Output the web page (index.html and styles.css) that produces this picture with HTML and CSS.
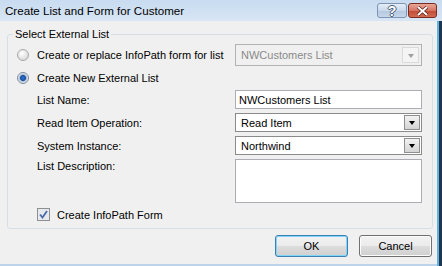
FILE: index.html
```html
<!DOCTYPE html>
<html>
	<head>
		<meta charset="UTF-8">
		<title>Create List and Form for Customer</title>
		<link rel="stylesheet" href="styles.css">
	</head>
	<body>
		<div class="dialog">
			<div class="titlebar">
				<span class="title">Create List and Form for Customer</span>
				<div class="caption-btns">
					<span class="cap-btn help">?</span>
					<span class="cap-btn close">
						<svg width="13" height="10" viewBox="0 0 13 10"><path d="M2 1 L11 9 M11 1 L2 9" stroke="#5a1d14" stroke-width="3.4"/><path d="M2 1 L11 9 M11 1 L2 9" stroke="#fff" stroke-width="2"/></svg>
					</span>
				</div>
			</div>
			<div class="body">
				<fieldset class="group">
					<legend>Select External List</legend>
					<div class="form-grid">
						<span class="radio"></span>
						<span class="label">Create or replace InfoPath form for list</span>
						<div class="combo disabled">
							<span class="combo-text">NWCustomers List</span>
							<span class="combo-btn"><i class="arrow"></i></span>
						</div>

						<span class="radio checked"></span>
						<span class="label span2">Create New External List</span>

						<span></span>
						<span class="label">List Name:</span>
						<div class="textbox">NWCustomers List</div>

						<span></span>
						<span class="label">Read Item Operation:</span>
						<div class="combo">
							<span class="combo-text">Read Item</span>
							<span class="combo-btn"><i class="arrow"></i></span>
						</div>

						<span></span>
						<span class="label">System Instance:</span>
						<div class="combo">
							<span class="combo-text">Northwind</span>
							<span class="combo-btn"><i class="arrow"></i></span>
						</div>

						<span></span>
						<span class="label top">List Description:</span>
						<div class="textarea"></div>

						<span></span>
						<div class="check-row span2">
							<span class="checkbox">
								<svg width="9" height="9" viewBox="0 0 9 9"><path d="M1 4.5 L3.5 7.5 L8 1" fill="none" stroke="#4a6aa8" stroke-width="1.8"/></svg>
							</span>
							<span class="label">Create InfoPath Form</span>
						</div>
					</div>
				</fieldset>
				<div class="buttons">
					<button class="btn default">OK</button>
					<button class="btn">Cancel</button>
				</div>
			</div>
		</div>
	</body>
</html>
```

FILE: styles.css
```css
body{
	margin: 0;
	padding: 0;
	font-family: "Liberation Sans", Arial, sans-serif;
	font-size: 11px;
	color: #000;
}
.dialog{
	width: 442px;
	height: 266px;
	box-sizing: border-box;
	background: #f0f0f0;
	display: flex;
	flex-direction: column;
	box-shadow: inset -3px 0 0 #1f3550, inset -5px 0 0 #5fb4e2, inset 0 -2px 0 #bcd3ea;
	overflow: hidden;
}
.titlebar{
	height: 21px;
	flex: none;
	display: flex;
	align-items: center;
	justify-content: space-between;
	background: linear-gradient(to bottom, #c8dbf0, #d8e6f5);
	padding-left: 5px;
	padding-right: 5px;
}
.title{
	font-size: 11.6px;
	margin-top: -1px;
}
.caption-btns{
	display: flex;
	align-self: flex-start;
	margin-top: 3px;
}
.cap-btn{
	height: 15px;
	display: flex;
	align-items: center;
	justify-content: center;
	box-sizing: border-box;
	border-radius: 3px;
}
.help{
	width: 30px;
	border: 1px solid #7d95b2;
	background: linear-gradient(to bottom, #e6eef8 0%, #c9d8ea 50%, #b3c7df 51%, #c6d6ea 100%);
	color: #fff;
	font-weight: bold;
	font-size: 14px;
	text-shadow: -1px 0 #4a5d78, 1px 0 #4a5d78, 0 -1px #4a5d78, 0 1px #4a5d78;
	margin-right: 1px;
}
.close{
	width: 29px;
	border: 1px solid #7a2c20;
	background: linear-gradient(to bottom, #e9a799 0%, #d47663 50%, #c24a33 51%, #d26b52 100%);
}
.body{
	flex: 1;
	display: flex;
	flex-direction: column;
}
.group{
	margin: 7px 9px 0 7px;
	padding: 0 8px 7px 8px;
	border: 1px solid #d5dfe5;
	border-radius: 3px;
	min-width: 0;
}
.group legend{
	padding: 0 2px;
	margin-left: -3px;
	line-height: 13px;
}
.form-grid{
	margin-top: 3px;
	display: grid;
	grid-template-columns: 21px 198px 187px;
	grid-template-rows: 22px 16px 19px 19px 19px 44px 14px;
	row-gap: 4px;
	align-items: center;
}
.span2{
	grid-column: span 2;
}
.label{
	white-space: nowrap;
}
.label.top{
	align-self: start;
	margin-top: 1px;
}
.radio{
	width: 12px;
	height: 12px;
	box-sizing: border-box;
	border-radius: 50%;
	border: 1px solid #a8a8a8;
	background: radial-gradient(circle at 40% 35%, #ffffff, #dcdcdc 70%);
	margin-left: 1px;
}
.radio.checked{
	border-color: #7b8a9c;
	background: radial-gradient(circle at 50% 50%, #2a7ad8 0, #1b4fa0 2.5px, #a9bdd3 3.5px, #eef1f5 5px);
}
.combo, .textbox, .textarea{
	box-sizing: border-box;
	background: #fff;
	height: 100%;
}
.combo{
	display: flex;
	align-items: stretch;
	border: 1px solid #8b8b8b;
	padding: 1px;
}
.combo-text{
	flex: 1;
	padding-left: 4px;
	display: flex;
	align-items: center;
}
.combo-btn{
	width: 16px;
	box-sizing: border-box;
	border: 1px solid #8f8f8f;
	background: linear-gradient(to bottom, #f2f2f2, #d4d4d4);
	display: flex;
	align-items: center;
	justify-content: center;
}
.arrow{
	width: 0;
	height: 0;
	border-left: 3.5px solid transparent;
	border-right: 3.5px solid transparent;
	border-top: 4px solid #000;
	margin-top: 1px;
}
.combo.disabled{
	background: #f0f0f0;
	border-color: #b2b2b2;
	color: #8a8a8a;
	padding: 2px;
}
.combo.disabled .combo-text{
	padding-left: 3px;
}
.combo.disabled .combo-btn{
	border-color: #dadada;
	background: #f4f4f4;
	width: 17px;
}
.combo.disabled .arrow{
	border-top-color: #a0a0a0;
}
.textbox{
	border: 1px solid #abadb3;
	padding-left: 3px;
	display: flex;
	align-items: center;
}
.textarea{
	border: 1px solid #abadb3;
}
.check-row{
	display: flex;
	align-items: center;
	gap: 7px;
	margin-top: 1px;
}
.checkbox{
	width: 13px;
	height: 13px;
	box-sizing: border-box;
	border: 1px solid #8e8f8f;
	background: #e6e9ee;
	display: flex;
	align-items: center;
	justify-content: center;
}
.buttons{
	display: flex;
	justify-content: flex-end;
	gap: 11px;
	margin-top: 6px;
	padding-right: 10px;
}
.btn{
	width: 73px;
	height: 22px;
	font-family: "Liberation Sans", Arial, sans-serif;
	font-size: 11px;
	border: 1px solid #707070;
	border-radius: 3px;
	background: linear-gradient(to bottom, #f2f2f2 0%, #ebebeb 50%, #dddddd 51%, #cfcfcf 100%);
	box-shadow: inset 0 0 0 1px #fcfcfc;
	padding: 0;
	color: #000;
}
.btn.default{
	border-color: #3c7fb1;
	box-shadow: inset 0 0 0 1px #7fd6f8;
}
```
